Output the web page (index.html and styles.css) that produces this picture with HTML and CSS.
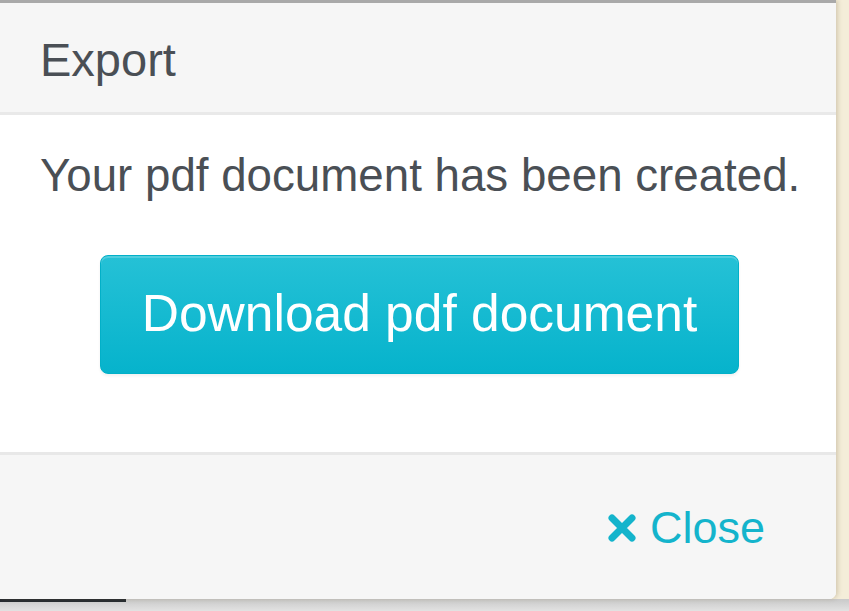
FILE: index.html
```html
<!DOCTYPE html>
<html lang="en">
<head>
  <meta charset="UTF-8" />
  <meta name="viewport" content="width=device-width, initial-scale=1.0" />
  <title>Export</title>
  <link rel="stylesheet" href="styles.css">
</head>
<body>
  <div class="stage">
    <div class="stage-top">
      <div class="modal">
        <div class="modal-header">
          <h4 class="modal-title">Export</h4>
        </div>
        <div class="modal-body">
          <p class="modal-text">Your pdf document has been created.</p>
          <a class="btn-download" href="#">Download pdf document</a>
        </div>
        <div class="modal-footer">
          <a class="btn-close" href="#">
            <svg class="close-icon" viewBox="0 0 30 30" width="30" height="30">
              <path d="M5 5 L25 25 M25 5 L5 25" />
            </svg>
            <span>Close</span>
          </a>
        </div>
      </div>
      <div class="side"></div>
    </div>
    <div class="ground">
      <div class="ground-line"></div>
    </div>
  </div>
</body>
</html>
```

FILE: styles.css
```css
* {
  box-sizing: border-box;
  margin: 0;
  padding: 0;
}
body {
  background: #f4edd9;
  font-family: "Liberation Sans", Arial, sans-serif;
  color: #4a4f55;
  overflow: hidden;
}
.stage {
  display: flex;
  flex-direction: column;
  width: 849px;
  height: 611px;
}
.stage-top {
  display: flex;
  height: 599px;
}
.modal {
  width: 836px;
  height: 599px;
  display: flex;
  flex-direction: column;
  background: #fff;
  border-top: 3px solid #a9a9a9;
  border-radius: 0 0 7px 0;
  box-shadow: 2px 0 4px rgba(120, 100, 60, 0.25);
  overflow: hidden;
  position: relative;
  z-index: 1;
}
.modal-header {
  height: 112px;
  flex-shrink: 0;
  display: flex;
  align-items: center;
  padding: 4px 40px 0;
  background: #f6f6f6;
  border-bottom: 3px solid #e9e9e9;
}
.modal-title {
  font-size: 47px;
  font-weight: normal;
  line-height: 56px;
}
.modal-body {
  display: flex;
  flex-direction: column;
  flex-shrink: 0;
  padding: 34px 40px 74px;
  height: 337px;
}
.modal-text {
  font-size: 45.7px;
  line-height: 54px;
  white-space: nowrap;
}
.btn-download {
  align-self: center;
  flex-shrink: 0;
  margin: 52px 0 0 3px;
  width: 639px;
  height: 119px;
  display: flex;
  align-items: center;
  justify-content: center;
  padding-bottom: 4px;
  font-size: 51.5px;
  white-space: nowrap;
  color: #fff;
  text-decoration: none;
  background: linear-gradient(#25c1d6, #06b3cc);
  border: 1px solid #02b0c8;
  border-radius: 8px;
  box-shadow: inset 0 2px 0 rgba(255, 255, 255, 0.2), 0 2px 3px rgba(0, 0, 0, 0.06);
}
.modal-footer {
  flex: 1;
  display: flex;
  align-items: center;
  justify-content: flex-end;
  padding: 2px 71px 0 0;
  background: #f6f6f6;
  border-top: 3px solid #e8e8e8;
}
.btn-close {
  display: flex;
  align-items: center;
  gap: 13px;
  font-size: 45px;
  color: #14b4cc;
  text-decoration: none;
}
.close-icon {
  fill: none;
  stroke: #14b4cc;
  stroke-width: 7;
  stroke-linecap: round;
}
.side {
  flex: 1;
  background: #f4edd9;
}
.ground {
  height: 12px;
  background: linear-gradient(#c9c9c9, #e2e2e2);
}
.ground-line {
  width: 126px;
  height: 3px;
  background: #262b30;
}
```
